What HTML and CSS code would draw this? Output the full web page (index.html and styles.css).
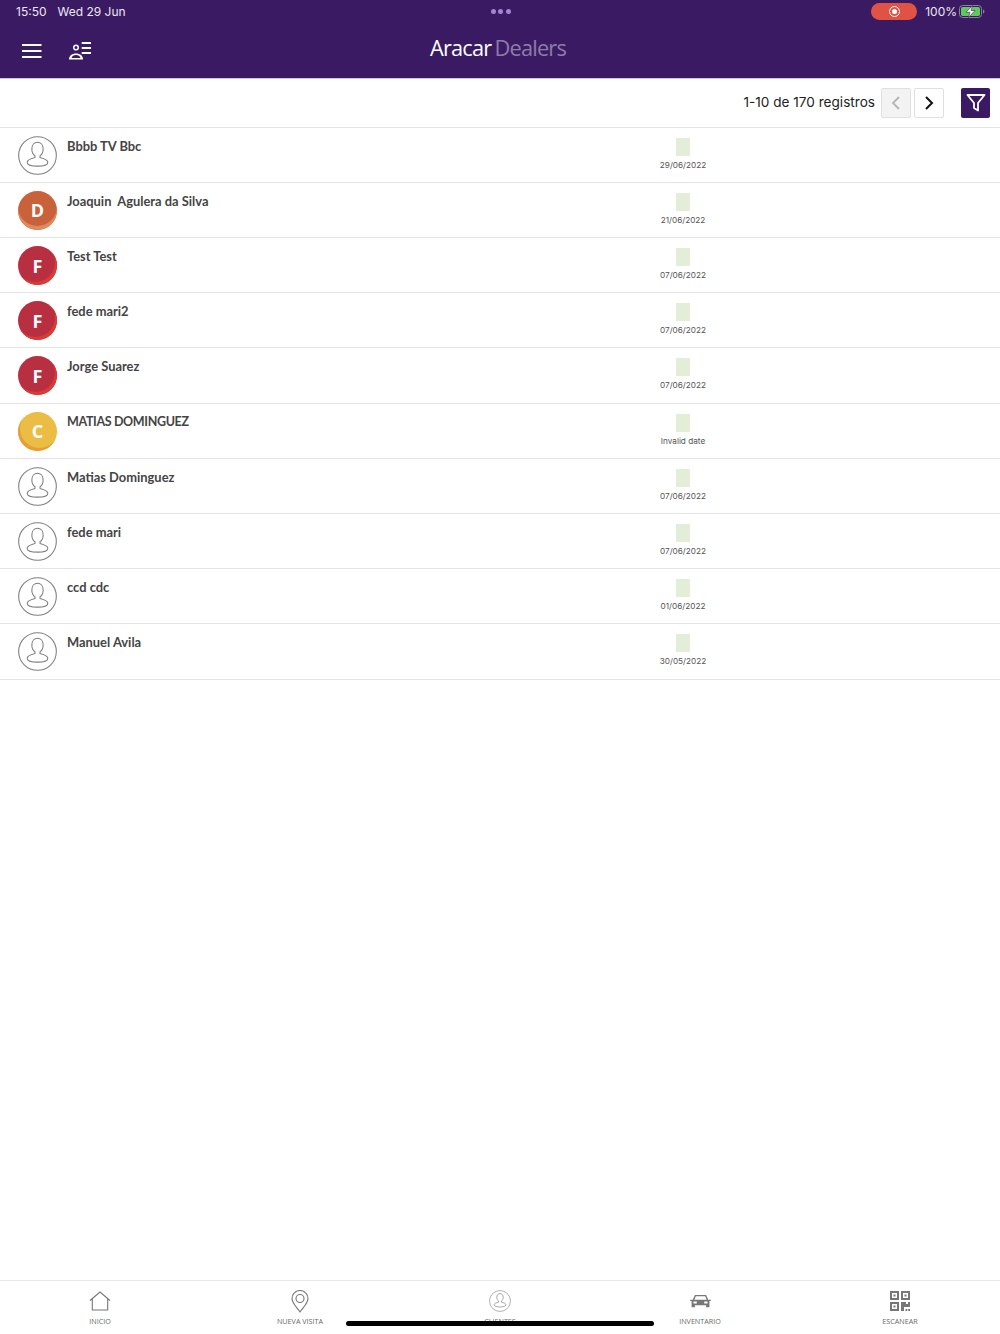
FILE: index.html
```html
<!DOCTYPE html>
<html lang="en">
<head>
    <meta charset="UTF-8">
    <meta name="viewport" content="width=device-width, initial-scale=1.0">
    <title>Aracar Dealers</title>
    <link rel="stylesheet" href="styles.css">
</head>
<body>
    <div class="app">
        <header class="topbar">
            <div class="status-bar">
                <div class="status-time"><span>15:50</span><span>Wed 29 Jun</span></div>
                <div class="status-dots"><i></i><i></i><i></i></div>
                <div class="status-right">
                    <div class="rec-pill"><span class="rec-dot"></span></div>
                    <span>100%</span>
                    <svg class="battery" width="26" height="13" viewBox="0 0 26 13">
                        <rect x="0.5" y="0.5" width="22" height="12" rx="3.2" fill="none" stroke="#8d7fa3"/>
                        <rect x="2" y="2" width="19" height="9" rx="1.8" fill="#5fc95a"/>
                        <path d="M24 4.5c1 .3 1.4 1 1.4 2s-.4 1.700-1.400 2z" fill="#8d7fa3"/>
                        <path d="M13.500 .5 7 7.300h4l-1.500 5.200 6.500-7h-4z" fill="#fff" stroke="#3a1b63" stroke-width=".6"/>
                    </svg>
                </div>
            </div>
            <div class="nav-bar">
                <div class="nav-icons">
                    <svg width="20" height="14" viewBox="0 0 20 14">
                        <path d="M0 1h19.500M0 7h19.500M0 13h19.500" stroke="#fff" stroke-width="2" fill="none"/>
                    </svg>
                    <svg width="22" height="18" viewBox="0 0 22 18">
                        <circle cx="7" cy="5.500" r="2.300" fill="none" stroke="#fff" stroke-width="1.500"/>
                        <path d="M0 17.500c0-3.800 2.800-6 7-6s7 2.200 7 6z" fill="#fff"/>
                        <path d="M2.500 16h9c-.5-1.900-2.200-2.900-4.500-2.900s-4 1-4.500 2.900z" fill="#3a1b63"/>
                        <path d="M12.700 1H22M12.700 6H22M12.700 11H22" stroke="#fff" stroke-width="1.900" fill="none"/>
                    </svg>
                </div>
                <div class="logo"><span class="logo-main">Aracar</span><span class="logo-sub">Dealers</span></div>
            </div>
        </header>

        <div class="toolbar">
            <span class="records">1-10 de 170 registros</span>
            <button class="page-btn page-btn-off">
                <svg width="10" height="14" viewBox="0 0 10 14"><path d="M8 1 2 7l6 6" fill="none" stroke="#b5b5b5" stroke-width="1.800"/></svg>
            </button>
            <button class="page-btn">
                <svg width="10" height="14" viewBox="0 0 10 14"><path d="M2 1l6 6-6 6" fill="none" stroke="#111" stroke-width="2"/></svg>
            </button>
            <button class="filter-btn">
                <svg width="20" height="20" viewBox="0 0 20 20"><path d="M1.500 2h17l-6.500 8v7.500l-4-2.500v-5z" fill="none" stroke="#fff" stroke-width="1.800" stroke-linejoin="round"/></svg>
            </button>
        </div>

        <main class="list">
            <div class="row">
                <div class="avatar avatar-empty"><svg width="39" height="39" viewBox="0 0 40 40"><use href="#person"/></svg></div>
                <div class="name">Bbbb TV Bbc</div>
                <div class="when"><span class="swatch"></span><span class="date">29/06/2022</span></div>
            </div>
            <div class="row">
                <div class="avatar avatar-d">D</div>
                <div class="name">Joaquin&nbsp; Agulera da Silva</div>
                <div class="when"><span class="swatch"></span><span class="date">21/06/2022</span></div>
            </div>
            <div class="row">
                <div class="avatar avatar-f">F</div>
                <div class="name">Test Test</div>
                <div class="when"><span class="swatch"></span><span class="date">07/06/2022</span></div>
            </div>
            <div class="row">
                <div class="avatar avatar-f">F</div>
                <div class="name">fede mari2</div>
                <div class="when"><span class="swatch"></span><span class="date">07/06/2022</span></div>
            </div>
            <div class="row">
                <div class="avatar avatar-f">F</div>
                <div class="name">Jorge Suarez</div>
                <div class="when"><span class="swatch"></span><span class="date">07/06/2022</span></div>
            </div>
            <div class="row">
                <div class="avatar avatar-c">C</div>
                <div class="name name-caps">MATIAS DOMINGUEZ</div>
                <div class="when"><span class="swatch"></span><span class="date">Invalid date</span></div>
            </div>
            <div class="row">
                <div class="avatar avatar-empty"><svg width="39" height="39" viewBox="0 0 40 40"><use href="#person"/></svg></div>
                <div class="name">Matias Dominguez</div>
                <div class="when"><span class="swatch"></span><span class="date">07/06/2022</span></div>
            </div>
            <div class="row">
                <div class="avatar avatar-empty"><svg width="39" height="39" viewBox="0 0 40 40"><use href="#person"/></svg></div>
                <div class="name">fede mari</div>
                <div class="when"><span class="swatch"></span><span class="date">07/06/2022</span></div>
            </div>
            <div class="row">
                <div class="avatar avatar-empty"><svg width="39" height="39" viewBox="0 0 40 40"><use href="#person"/></svg></div>
                <div class="name">ccd cdc</div>
                <div class="when"><span class="swatch"></span><span class="date">01/06/2022</span></div>
            </div>
            <div class="row">
                <div class="avatar avatar-empty"><svg width="39" height="39" viewBox="0 0 40 40"><use href="#person"/></svg></div>
                <div class="name">Manuel Avila</div>
                <div class="when"><span class="swatch"></span><span class="date">30/05/2022</span></div>
            </div>
        </main>

        <nav class="tabbar">
            <div class="tab">
                <svg width="22" height="20" viewBox="0 0 22 20"><path d="M1 9.500 11 1l10 8.500M3.300 8v11h15.400V8" fill="none" stroke="#777" stroke-width="1.100"/></svg>
                <span>INICIO</span>
            </div>
            <div class="tab">
                <svg width="18" height="23" viewBox="0 0 18 23"><path d="M9 22C5 16.500 1 13 1 8.500a8 8 0 0 1 16 0C17 13 13 16.500 9 22z" fill="none" stroke="#777" stroke-width="1.100"/><circle cx="9" cy="8.500" r="4" fill="none" stroke="#777" stroke-width="1.100"/></svg>
                <span>NUEVA VISITA</span>
            </div>
            <div class="tab">
                <svg width="22" height="22" viewBox="0 0 40 40"><use href="#person-wide"/></svg>
                <span>CLIENTES</span>
            </div>
            <div class="tab">
                <svg width="21" height="15" viewBox="0 0 22 16"><path d="M5 1h12l2.200 5H22v1.500h-1.500V14h-3.500v-2H5v2H1.500V7.500H0V6h2.800zM6 2.500 4.500 6h13L16 2.500zM3.500 8v2H7V8zM15 8v2h3.500V8z" fill="#777" fill-rule="evenodd"/></svg>
                <span>INVENTARIO</span>
            </div>
            <div class="tab">
                <svg width="20" height="20" viewBox="0 0 20 20"><path d="M0 0h9v9H0zM2 2v5h5V2zM3.500 3.500h2v2h-2zM11 0h9v9h-9zM13 2v5h5V2zM14.500 3.500h2v2h-2zM0 11h9v9H0zM2 13v5h5v-5zM3.500 14.500h2v2h-2zM11 11h5v2h2v-2h2v5h-6v4h-3zM15.500 18h1.800v2h-1.800zM18.200 18H20v2h-1.800z" fill="#777" fill-rule="evenodd"/></svg>
                <span>ESCANEAR</span>
            </div>
        </nav>
        <div class="home-bar"></div>
    </div>

    <svg class="defs" width="0" height="0">
        <symbol id="person" viewBox="0 0 40 40">
            <circle cx="20" cy="20" r="19.300" fill="none" stroke="#7f7f7f" stroke-width="1.100"/>
            <path d="M14.200 13.500c0-4.400 2.500-7 5.800-7s5.800 2.600 5.800 7c0 3.200-1.600 5.600-3.200 6.700v1.800c3.500 1 8 2.300 8 4.800 0 2.800-4.500 4.100-10.600 4.100s-10.600-1.300-10.600-4.100c0-2.500 4.500-3.800 8-4.800v-1.800c-1.600-1.100-3.200-3.500-3.200-6.700z" fill="none" stroke="#7f7f7f" stroke-width="1.100"/>
        </symbol>
        <symbol id="person-wide" viewBox="0 0 40 40">
            <circle cx="20" cy="20" r="19" fill="none" stroke="#8a8a8a" stroke-width="1.200"/>
            <path d="M14.200 13.500c0-4.400 2.500-7 5.800-7s5.800 2.600 5.800 7c0 3.200-1.600 5.600-3.200 6.700v1.800c3.500 1 8 2.300 8 4.800 0 2.800-4.500 4.100-10.600 4.100s-10.600-1.300-10.600-4.100c0-2.500 4.500-3.800 8-4.800v-1.800c-1.600-1.100-3.200-3.500-3.200-6.700z" fill="none" stroke="#8a8a8a" stroke-width="1.400"/>
        </symbol>
    </svg>
</body>
</html>
```

FILE: styles.css
```css
/* General Styling */
body {
    font-family: 'Inter', sans-serif;
    margin: 0;
    padding: 0;
    background-color: #fff;
    color: #333;
}

.app {
    position: relative;
    display: flex;
    flex-direction: column;
    height: 1334px;
    overflow: hidden;
}

.defs {
    position: absolute;
}

/* Header */
.topbar {
    height: 78px;
    background-color: #3a1b63;
    color: #fff;
    border-bottom: 1px solid #cfc8da;
    flex-shrink: 0;
}

.status-bar {
    display: grid;
    grid-template-columns: 1fr 1fr 1fr;
    align-items: center;
    height: 23px;
    margin-bottom: 1px;
    padding: 0 15px 0 16px;
    font-size: 12px;
    color: #ece8f1;
}

.status-time {
    display: flex;
    gap: 11px;
}

.status-dots {
    display: flex;
    justify-content: center;
    gap: 2.500px;
}

.status-dots i {
    width: 5px;
    height: 5px;
    border-radius: 50%;
    background-color: #a684d2;
}

.status-right {
    display: flex;
    justify-content: flex-end;
    align-items: center;
    gap: 2px;
}

.rec-pill {
    display: flex;
    align-items: center;
    justify-content: center;
    width: 46px;
    height: 17px;
    margin-right: 6px;
    border-radius: 9px;
    background-color: #e05243;
}

.rec-dot {
    width: 5px;
    height: 5px;
    border: 2px solid #e05243;
    outline: 1.500px solid #fff;
    border-radius: 50%;
    background-color: #fff;
}

.nav-bar {
    position: relative;
    display: flex;
    align-items: center;
    height: 54px;
}

.nav-icons {
    display: flex;
    align-items: center;
    gap: 27px;
    padding-left: 22px;
}

.logo {
    position: absolute;
    left: 0;
    right: 4px;
    top: 9px;
    text-align: center;
    font-family: 'Open Sans', sans-serif;
    font-size: 21.800px;
    letter-spacing: -0.800px;
}

.logo-main {
    color: #fff;
    font-weight: 500;
    margin-right: 3px;
}

.logo-sub {
    color: #8f7ba9;
}

/* Pagination */
.toolbar {
    display: flex;
    align-items: center;
    justify-content: flex-end;
    height: 48px;
    padding-right: 10px;
    border-bottom: 1px solid #e4e4e4;
    flex-shrink: 0;
}

.records {
    font-size: 13.600px;
    color: #222;
    margin: 0 6px 2px 0;
}

.page-btn {
    display: flex;
    align-items: center;
    justify-content: center;
    width: 30px;
    height: 30px;
    margin-left: 3px;
    padding: 0;
    background-color: #fff;
    border: 1px solid #e0e0e0;
    border-radius: 2px;
}

.page-btn-off {
    background-color: #f3f3f3;
    margin-left: 0;
}

.filter-btn {
    display: flex;
    align-items: center;
    justify-content: center;
    width: 29px;
    height: 30px;
    margin-left: 17px;
    padding: 0;
    border: none;
    border-radius: 2px;
    background-color: #3a1b63;
}

/* Rows */
.list {
    flex: 1;
    margin-top: -0.300px;
}

.row {
    display: grid;
    grid-template-columns: 67px 561px 110px;
    height: 54.200px;
    border-bottom: 1px solid #e4e4e4;
}

.avatar {
    display: flex;
    align-items: center;
    justify-content: center;
    width: 39px;
    height: 39px;
    margin: 8px 0 0 18px;
    border-radius: 50%;
    color: #fff;
    font-family: 'Open Sans', sans-serif;
    font-size: 18px;
    font-weight: 700;
}

.avatar-d {
    background-color: #c9623a;
    box-shadow: inset 0 -4px 0 #e0895f;
}

.avatar-f {
    background-color: #b92f42;
    box-shadow: inset -2px -3px 0 #dc3b33;
}

.avatar-c {
    background-color: #ebbd45;
    box-shadow: inset 2px -3px 0 #e69f38;
}

.name {
    margin-top: 10px;
    font-family: 'Lato', sans-serif;
    font-size: 12.900px;
    font-weight: 700;
    line-height: 16px;
    color: #444;
}

.name-caps {
    font-size: 12.500px;
    letter-spacing: -0.350px;
}

.when {
    display: flex;
    flex-direction: column;
    align-items: center;
}

.swatch {
    width: 14px;
    height: 18px;
    margin-top: 10px;
    background-color: #e3edd8;
}

.date {
    margin-top: 4px;
    font-size: 8.200px;
    line-height: 11px;
    color: #555;
}

/* Bottom tabs */
.tabbar {
    display: grid;
    grid-template-columns: repeat(5, 1fr);
    height: 53px;
    border-top: 1px solid #e8e8e8;
    flex-shrink: 0;
}

.tab {
    display: grid;
    grid-template-rows: 24px 10px;
    justify-items: center;
    align-items: center;
    row-gap: 3px;
    padding-top: 8px;
    align-content: start;
    font-family: 'Open Sans', sans-serif;
    font-size: 7.200px;
    color: #6a6a6a;
}

.home-bar {
    position: absolute;
    left: 346px;
    bottom: 8px;
    width: 308px;
    height: 5px;
    border-radius: 3px;
    background-color: #000;
}
```
